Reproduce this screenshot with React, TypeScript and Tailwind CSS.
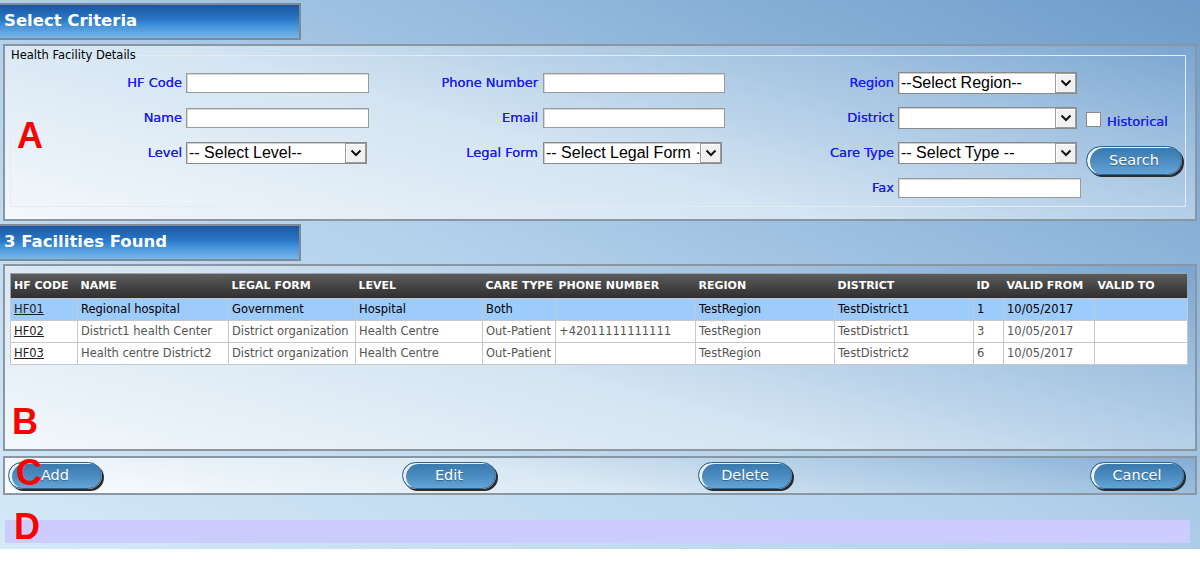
import React from "react";

const labelCls =
  "pr-[4px] text-right text-[13px] leading-none text-[#1c1cf0] font-['DejaVu_Sans',sans-serif] [text-shadow:0_0_0.5px_#1c1cf0]";

const TextBox = ({ className = "" }: { className?: string }) => (
  <div
    className={`h-[20px] bg-white border border-[#9a9a9a] shadow-[inset_1px_1px_0_#d8d8d8] ${className}`}
  />
);

const Chevron = () => (
  <svg width="12" height="8" viewBox="0 0 12 8">
    <path d="M1.5 1.5 L6 6 L10.5 1.5" fill="none" stroke="#111" strokeWidth="2" />
  </svg>
);

const SelectBox = ({ text, className = "" }: { text: string; className?: string }) => (
  <div
    className={`flex h-[22px] bg-white border border-[#8a8a8a] shadow-[inset_1px_1px_0_#cfcfcf] ${className}`}
  >
    <span className="flex-1 overflow-hidden whitespace-nowrap pl-[2px] text-[16px] leading-[20px] text-black font-['Liberation_Sans',sans-serif]">
      {text}
    </span>
    <div className="flex w-[21px] items-center justify-center border border-[#9c9c9c] bg-[#f1f1f1] shadow-[inset_1px_1px_0_#fff]">
      <Chevron />
    </div>
  </div>
);

const PillButton = ({
  label,
  className = "",
}: {
  label: string;
  className?: string;
}) => (
  <button
    className={`flex items-center justify-center rounded-full border border-[#2f638f] bg-[linear-gradient(180deg,#3a78ab_0%,#4a8bc0_50%,#64a4d6_100%)] text-white text-[14.5px] leading-none font-['DejaVu_Sans',sans-serif] [text-shadow:0_1px_1px_rgba(0,0,0,0.35)] shadow-[inset_3px_1px_0_rgba(255,255,255,0.9),2px_2px_0_#2b2b2b] ${className}`}
  >
    {label}
  </button>
);

const TitleBar = ({ title }: { title: string }) => (
  <div className="flex h-[37px] w-[301px] items-center border-2 border-l-0 border-[#7d8a97] bg-[linear-gradient(180deg,#1b57a0_0%,#2b78c6_45%,#3689d6_55%,#7cb6e9_100%)] pl-[4px]">
    <span className="text-[16.5px] font-bold text-white font-['DejaVu_Sans',sans-serif]">
      {title}
    </span>
  </div>
);

const panelBg =
  "border-2 border-[#8a96a2] bg-[linear-gradient(15deg,#f3f8fc_0%,#d3e4f2_45%,#9dbfdf_80%,#7aa5d1_100%)]";

const columns = [
  { key: "code", title: "HF CODE", w: "w-[67px]" },
  { key: "name", title: "NAME", w: "w-[151px]" },
  { key: "legal", title: "LEGAL FORM", w: "w-[127px]" },
  { key: "level", title: "LEVEL", w: "w-[127px]" },
  { key: "care", title: "CARE TYPE", w: "w-[73px]" },
  { key: "phone", title: "PHONE NUMBER", w: "w-[140px]" },
  { key: "region", title: "REGION", w: "w-[139px]" },
  { key: "district", title: "DISTRICT", w: "w-[139px]" },
  { key: "id", title: "ID", w: "w-[30px]" },
  { key: "from", title: "VALID FROM", w: "w-[91px]" },
  { key: "to", title: "VALID TO", w: "w-[93px]" },
];

const rows = [
  {
    code: "HF01",
    name: "Regional hospital",
    legal: "Government",
    level: "Hospital",
    care: "Both",
    phone: "",
    region: "TestRegion",
    district: "TestDistrict1",
    id: "1",
    from: "10/05/2017",
    to: "",
  },
  {
    code: "HF02",
    name: "District1 health Center",
    legal: "District organization",
    level: "Health Centre",
    care: "Out-Patient",
    phone: "+42011111111111",
    region: "TestRegion",
    district: "TestDistrict1",
    id: "3",
    from: "10/05/2017",
    to: "",
  },
  {
    code: "HF03",
    name: "Health centre District2",
    legal: "District organization",
    level: "Health Centre",
    care: "Out-Patient",
    phone: "",
    region: "TestRegion",
    district: "TestDistrict2",
    id: "6",
    from: "10/05/2017",
    to: "",
  },
];

const Mark = ({ ch, className }: { ch: string; className: string }) => (
  <span
    className={`absolute text-[36px] leading-none font-bold text-[#ff0000] font-['Liberation_Sans',sans-serif] ${className}`}
  >
    {ch}
  </span>
);

export default function App() {
  return (
    <div className="h-[575px] w-[1200px] bg-white">
      <div className="relative flex h-[549px] w-[1200px] flex-col bg-[linear-gradient(25deg,#d5e9f7_0%,#b4d2ec_45%,#6d9cca_100%)]">
        <div className="mt-[3px]">
          <TitleBar title="Select Criteria" />
        </div>

        {/* A: criteria */}
        <div className={`mx-[3px] mt-[4px] h-[177px] ${panelBg}`}>
          <fieldset className="ml-[5px] mt-[2px] h-[159px] w-[1176px] border border-[#e3ebf3]">
            <legend className="text-[11.5px] leading-[14px] text-black font-['DejaVu_Sans',sans-serif]">
              Health Facility Details
            </legend>
            <div className="mt-[3px] grid grid-cols-[175px_183px_174px_182px_173px_183px_1fr] auto-rows-[35px] items-center">
              <span className={labelCls}>HF Code</span>
              <TextBox className="w-[183px]" />
              <span className={`${labelCls} pr-[5px]`}>Phone Number</span>
              <TextBox className="w-[182px]" />
              <span className={labelCls}>Region</span>
              <SelectBox text="--Select Region--" className="w-[179px]" />
              <span />

              <span className={labelCls}>Name</span>
              <TextBox className="w-[183px]" />
              <span className={`${labelCls} pr-[5px]`}>Email</span>
              <TextBox className="w-[182px]" />
              <span className={labelCls}>District</span>
              <SelectBox text="" className="w-[179px]" />
              <div className="ml-[5px] mt-[3px] flex items-center">
                <div className="h-[15px] w-[15px] border border-[#8a8a8a] bg-white" />
                <span className="ml-[6px] mt-[5px] text-[13px] leading-none text-[#1c1cf0] font-['DejaVu_Sans',sans-serif] [text-shadow:0_0_0.5px_#1c1cf0]">
                  Historical
                </span>
              </div>

              <span className={labelCls}>Level</span>
              <SelectBox text="-- Select Level--" className="w-[181px]" />
              <span className={`${labelCls} pr-[5px]`}>Legal Form</span>
              <SelectBox text="-- Select Legal Form ·" className="w-[179px]" />
              <span className={labelCls}>Care Type</span>
              <SelectBox text="-- Select Type --" className="w-[179px]" />
              <div className="self-start pt-[11px]">
                <PillButton label="Search" className="ml-[5px] h-[29px] w-[96px]" />
              </div>

              <span />
              <span />
              <span />
              <span />
              <span className={labelCls}>Fax</span>
              <TextBox className="w-[183px]" />
              <span />
            </div>
          </fieldset>
        </div>

        <div className="mt-[3px]">
          <TitleBar title="3 Facilities Found" />
        </div>

        {/* B: results */}
        <div className={`mx-[3px] mt-[3px] h-[187px] ${panelBg}`}>
          <table className="ml-[5px] mt-[7px] w-[1177px] table-fixed border-collapse border border-[#9aa3ab] font-['DejaVu_Sans',sans-serif]">
            <thead>
              <tr className="h-[25px] bg-[linear-gradient(180deg,#5c5c5c_0%,#444_50%,#2e2e2e_100%)]">
                {columns.map((c) => (
                  <th
                    key={c.key}
                    className={`${c.w} px-[3px] text-left text-[11px] font-bold text-white whitespace-nowrap overflow-hidden`}
                  >
                    {c.title}
                  </th>
                ))}
              </tr>
            </thead>
            <tbody>
              {rows.map((r, i) => (
                <tr
                  key={r.code}
                  className={`h-[22px] ${i === 0 ? "bg-[#9dcbfb] text-black" : "bg-white text-[#555]"}`}
                >
                  {columns.map((c) => (
                    <td
                      key={c.key}
                      className="border border-[#c4c9ce] px-[3px] text-[11.5px] leading-none whitespace-nowrap overflow-hidden"
                    >
                      {c.key === "code" ? (
                        <span className="text-[#222] underline">{r.code}</span>
                      ) : (
                        (r as Record<string, string>)[c.key]
                      )}
                    </td>
                  ))}
                </tr>
              ))}
            </tbody>
          </table>
        </div>

        {/* C: actions */}
        <div
          className={`mx-[3px] mt-[5px] flex h-[39px] items-center border-2 border-[#8a96a2] bg-[linear-gradient(10deg,#fbfdfe_0%,#dbe9f4_45%,#a5c5e2_80%,#85acd5_100%)]`}
        >
          <PillButton label="Add" className="ml-[3px] h-[27px] w-[94px]" />
          <PillButton label="Edit" className="ml-[300px] h-[27px] w-[94px]" />
          <PillButton label="Delete" className="ml-[202px] h-[27px] w-[94px]" />
          <PillButton label="Cancel" className="ml-[298px] h-[27px] w-[94px]" />
        </div>

        {/* D: message bar */}
        <div className="ml-[5px] mt-[25px] h-[23px] w-[1185px] bg-[#ccccff]" />

        <Mark ch="A" className="left-[17px] top-[118px]" />
        <Mark ch="B" className="left-[12px] top-[404px]" />
        <Mark ch="C" className="left-[16px] top-[455px]" />
        <Mark ch="D" className="left-[14px] top-[509px]" />
      </div>
    </div>
  );
}
